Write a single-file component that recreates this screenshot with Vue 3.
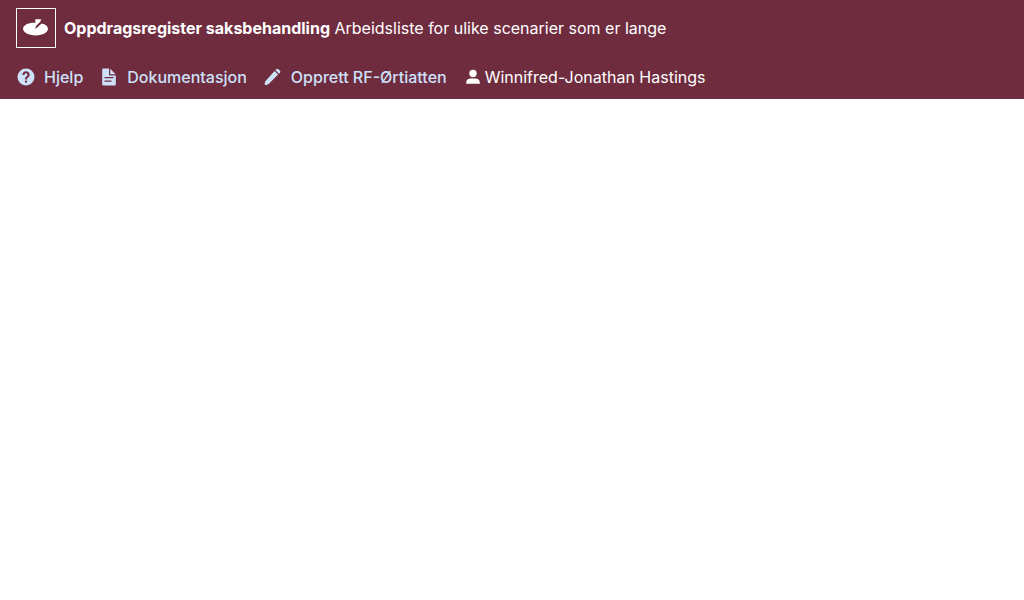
<script setup>
const links = [
  { label: 'Hjelp', path: 'M10 1.500a8.500 8.500 0 1 0 0 17 8.500 8.500 0 0 0 0-17zM6.400 7.900C6.400 5.800 8 4.300 10 4.300s3.600 1.500 3.600 3.400c0 1.400-.8 2.200-1.500 2.900-.7.600-1.100 1-1.100 1.900H9c0-1.700.8-2.500 1.600-3.200.6-.5.9-.9.9-1.500 0-.9-.6-1.500-1.500-1.500s-1.500.6-1.500 1.600zM10 13.400a1.200 1.200 0 1 1 0 2.400 1.200 1.200 0 0 1 0-2.400z' },
  { label: 'Dokumentasjon', path: 'M4.500 1.500H10v5.900c0 .6.400 1 1 1h5.800v8.800c0 .8-.5 1.300-1.300 1.300h-11c-.8 0-1.300-.5-1.300-1.300V2.800c0-.8.500-1.300 1.300-1.300zM11.200 1.700l5.400 5.500h-5.400zM5.500 10v1.300h9V10zM5.500 13.500v1.300h7v-1.300z' },
  { label: 'Opprett RF-Ørtiatten', path: 'M13.200 2.300c.7-.7 1.600-.7 2.300 0l1.300 1.300c.7.700.7 1.600 0 2.300l-.8.800-3.600-3.600zM11.500 4l3.600 3.600-8.900 8.900c-.9.900-2.300 1.500-3.700 1.500-.5 0-.8-.3-.8-.8 0-1.400.4-2.700 1.300-3.700z' },
]
</script>

<template>
  <header class="topbar">
    <div class="brand">
      <a class="logo" href="#" aria-label="Oppdragsregister">
        <svg viewBox="0 0 40 40" aria-hidden="true">
          <rect x=".5" y=".5" width="39" height="39" />
          <path class="mark" d="M19.500 14.700 19.200 11.200h6l-.8 2.200-4.600 4.900-.4 2.700 6.300-5.600c3.900.9 6.300 2.900 6.300 5.400 0 3.700-5.300 6.600-12.300 6.600S7 24.500 7 20.800s5.300-6.500 12.500-6.100z" />
        </svg>
      </a>
      <p class="title"><strong>Oppdragsregister saksbehandling</strong> <span>Arbeidsliste for ulike scenarier som er lange</span></p>
    </div>
    <nav class="menu">
      <a v-for="link in links" :key="link.label" class="link" href="#">
        <svg viewBox="0 0 20 20" aria-hidden="true"><path fill-rule="evenodd" :d="link.path" /></svg>
        <span>{{ link.label }}</span>
      </a>
      <div class="user">
        <svg viewBox="0 0 20 20" aria-hidden="true"><path d="M10 2.800a3.700 3.700 0 1 1 0 7.400 3.700 3.700 0 0 1 0-7.400zM3.200 16.700v-1.200c0-2.600 2-4.100 4.300-4.100h5c2.300 0 4.300 1.500 4.300 4.100v1.200z" /></svg>
        <span>Winnifred-Jonathan Hastings</span>
      </div>
    </nav>
  </header>
</template>

<style>
body { margin: 0; background: #fff; }
</style>

<style scoped>
.topbar {
  display: flex;
  flex-direction: column;
  gap: 16px;
  padding: 8px 16px 9px;
  background: #6f2c3f;
  color: #fff;
  font: 400 16px/26px Inter, sans-serif;
}
.brand { display: flex; align-items: center; gap: 8px; }
.logo { display: flex; color: #fff; }
.logo svg { width: 40px; height: 40px; }
.logo rect { fill: none; stroke: currentColor; }
.mark { fill: currentColor; }
.title { margin: 0; }
.title strong { font-weight: 700; }
.menu { display: flex; flex-wrap: wrap; align-items: center; gap: 16px; }
.link { display: flex; align-items: center; gap: 8px; color: #cde1f9; font-weight: 500; text-decoration: none; }
.link svg, .user svg { width: 20px; height: 20px; fill: currentColor; }
.user { display: flex; align-items: center; gap: 2px; }
</style>
